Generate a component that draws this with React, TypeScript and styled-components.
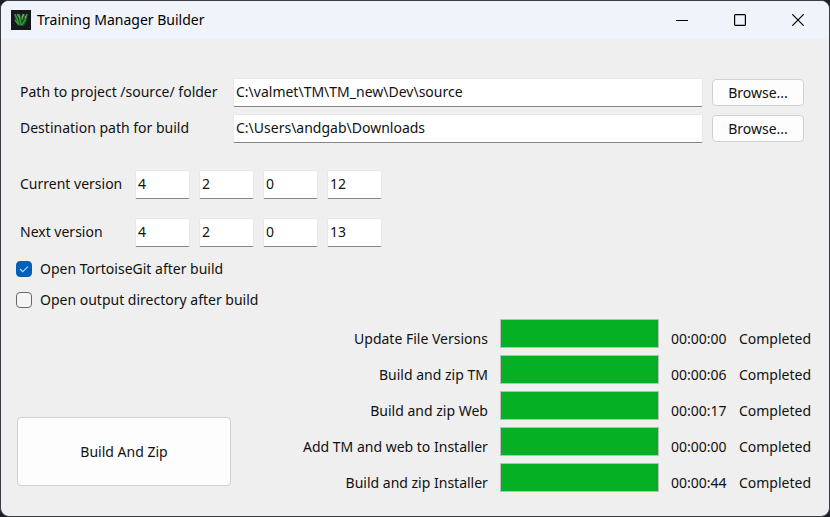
import React, { useState } from "react";
import styled, { createGlobalStyle } from "styled-components";

const GlobalStyle = createGlobalStyle`
  * { box-sizing: border-box; }
  body {
    margin: 0;
    background: #1c1e28;
    color: #111;
    font: 14px/18px "Noto Sans", "Open Sans", sans-serif;
  }
  button, input { font: inherit; color: inherit; }
`;

const Window = styled.main`
  display: flex;
  flex-direction: column;
  min-height: 100vh;
  border: 1px solid #3a3c44;
  border-radius: 9px;
  background: #efefef;
  overflow: hidden;
`;

const TitleBar = styled.header`
  display: flex;
  align-items: center;
  height: 38px;
  padding-left: 10px;
  gap: 6px;
  background: #f1f3fa;
`;

const Title = styled.h1`
  flex: 1;
  margin: 0;
  font-size: 14px;
  font-weight: 400;
  color: #000;
`;

const Caption = styled.nav`
  display: flex;
  height: 100%;
  padding-right: 2px;
`;

const CaptionButton = styled.button`
  display: grid;
  place-items: center;
  width: 58px;
  padding: 0;
  border: 0;
  background: transparent;
`;

const Content = styled.div`
  flex: 1;
  display: flex;
  flex-direction: column;
  padding: 39px 18px 24px 15px;
`;

const FieldName = styled.label`
  padding-bottom: 2px;
`;

const PathForm = styled.section`
  display: grid;
  grid-template-columns: 204px 1fr 92px;
  column-gap: 9px;
  row-gap: 7px;
  align-items: center;
  padding: 0 7px 0 4px;
`;

const TextBox = styled.input`
  width: 100%;
  min-width: 0;
  height: 29px;
  padding: 0 2px 2px;
  border: 1px solid #e8e8e8;
  border-bottom: 1px solid #868686;
  border-radius: 2px;
  background: #fff;
  outline: 0;
`;

const PushButton = styled.button`
  height: 27px;
  padding: 0;
  border: 1px solid #d0d0d0;
  border-radius: 4px;
  background: #fdfdfd;
`;

const BuildButton = styled(PushButton)`
  width: 214px;
  height: 69px;
  margin: 0 0 6px 1px;
`;

const Versions = styled.section`
  display: flex;
  flex-direction: column;
  gap: 19px;
  padding: 27px 0 13px 4px;
`;

const VersionRow = styled.fieldset`
  display: grid;
  grid-template-columns: 106px repeat(4, 55px);
  column-gap: 9px;
  align-items: center;
  margin: 0;
  padding: 0;
  border: 0;
`;

const Options = styled.section`
  display: flex;
  flex-direction: column;
  gap: 13px;
`;

const Option = styled.label`
  display: flex;
  align-items: center;
  gap: 8px;
`;

const CheckBox = styled.input`
  appearance: none;
  width: 16px;
  height: 16px;
  margin: 0;
  border: 1px solid #686868;
  border-radius: 4px;
  background: #f5f5f5;
  &:checked {
    border-color: #005fb8;
    background: #005fb8 url("data:image/svg+xml,%3Csvg xmlns='http://www.w3.org/2000/svg' viewBox='0 0 14 14'%3E%3Cpath d='M3 7l2.7 2.7L11 4.6' fill='none' stroke='%23b9dcf8' stroke-width='1.2'/%3E%3C/svg%3E");
  }
`;

const Lower = styled.section`
  flex: 1;
  display: flex;
  align-items: flex-end;
  justify-content: space-between;
`;

const Steps = styled.div`
  display: grid;
  grid-template-columns: auto 159px 56px auto;
  gap: 7px 12px;
  align-items: end;
`;

const StepLabel = styled.label`
  text-align: right;
`;

const Progress = styled.progress`
  appearance: none;
  display: block;
  width: 100%;
  height: 29px;
  border: 1px solid #bcbcbc;
  background: #e6e6e6;
  &::-webkit-progress-bar { background: #e6e6e6; }
  &::-webkit-progress-value { background: #06b025; }
`;

const steps = [
  { id: "versions", label: "Update File Versions", time: "00:00:00" },
  { id: "tm", label: "Build and zip TM", time: "00:00:06" },
  { id: "web", label: "Build and zip Web", time: "00:00:17" },
  { id: "add", label: "Add TM and web to Installer", time: "00:00:00" },
  { id: "installer", label: "Build and zip Installer", time: "00:00:44" },
];

const paths = [
  { id: "source", label: "Path to project /source/ folder", value: "C:\\valmet\\TM\\TM_new\\Dev\\source" },
  { id: "target", label: "Destination path for build", value: "C:\\Users\\andgab\\Downloads" },
];

const versions = [
  { id: "current", label: "Current version", parts: ["4", "2", "0", "12"] },
  { id: "next", label: "Next version", parts: ["4", "2", "0", "13"] },
];

const partNames = ["major", "minor", "patch", "build"];

function AppIcon() {
  return (
    <svg width="20" height="20" viewBox="0 0 20 20" aria-hidden="true">
      <rect width="20" height="20" fill="#16181b" />
      <path d="M3 4l3 2 2-3 2 3 3-3 1 2 3-2-1 8-3 5H8l-4-5z" fill="#1c4a22" />
      <path d="M4 4l2 5 2 6M8 4l1 6 1 5M12 4l-1 6M16 4l-2 6-3 5M4 10l3 4" fill="none" stroke="#369a3c" strokeWidth="1.4" />
      <path d="M6 4l3 4M13 4l-2 4M15 6l-1 2" stroke="#93a897" strokeWidth="1" />
    </svg>
  );
}

export default function App() {
  const [openGit, setOpenGit] = useState(true);
  const [openOutput, setOpenOutput] = useState(false);

  return (
    <>
      <GlobalStyle />
      <Window>
        <TitleBar>
          <AppIcon />
          <Title>Training Manager Builder</Title>
          <Caption aria-label="Window">
            <CaptionButton aria-label="Minimize">
              <svg width="12" height="12" viewBox="0 0 12 12"><path d="M0 6.5h12" stroke="#000" /></svg>
            </CaptionButton>
            <CaptionButton aria-label="Maximize">
              <svg width="12" height="12" viewBox="0 0 12 12"><rect x=".6" y=".6" width="10.8" height="10.8" rx="1" fill="none" stroke="#000" strokeWidth="1.2" /></svg>
            </CaptionButton>
            <CaptionButton aria-label="Close">
              <svg width="12" height="12" viewBox="0 0 12 12"><path d="M.3.3l11.4 11.4M11.7.3L.3 11.7" stroke="#000" strokeWidth="1.2" /></svg>
            </CaptionButton>
          </Caption>
        </TitleBar>
        <Content>
          <PathForm>
            {paths.map((p) => (
              <React.Fragment key={p.id}>
                <FieldName htmlFor={p.id}>{p.label}</FieldName>
                <TextBox id={p.id} defaultValue={p.value} spellCheck={false} />
                <PushButton type="button">Browse...</PushButton>
              </React.Fragment>
            ))}
          </PathForm>
          <Versions>
            {versions.map((v) => (
              <VersionRow key={v.id} aria-label={v.label}>
                <FieldName htmlFor={`${v.id}-major`}>{v.label}</FieldName>
                {v.parts.map((part, i) => (
                  <TextBox
                    key={partNames[i]}
                    id={`${v.id}-${partNames[i]}`}
                    aria-label={`${v.label} ${partNames[i]}`}
                    defaultValue={part}
                  />
                ))}
              </VersionRow>
            ))}
          </Versions>
          <Options>
            <Option>
              <CheckBox type="checkbox" checked={openGit} onChange={(e) => setOpenGit(e.target.checked)} />
              Open TortoiseGit after build
            </Option>
            <Option>
              <CheckBox type="checkbox" checked={openOutput} onChange={(e) => setOpenOutput(e.target.checked)} />
              Open output directory after build
            </Option>
          </Options>
          <Lower>
            <BuildButton type="button">Build And Zip</BuildButton>
            <Steps>
              {steps.map((s) => (
                <React.Fragment key={s.id}>
                  <StepLabel htmlFor={s.id}>{s.label}</StepLabel>
                  <Progress id={s.id} value={100} max={100} />
                  <span>{s.time}</span>
                  <span>Completed</span>
                </React.Fragment>
              ))}
            </Steps>
          </Lower>
        </Content>
      </Window>
    </>
  );
}
